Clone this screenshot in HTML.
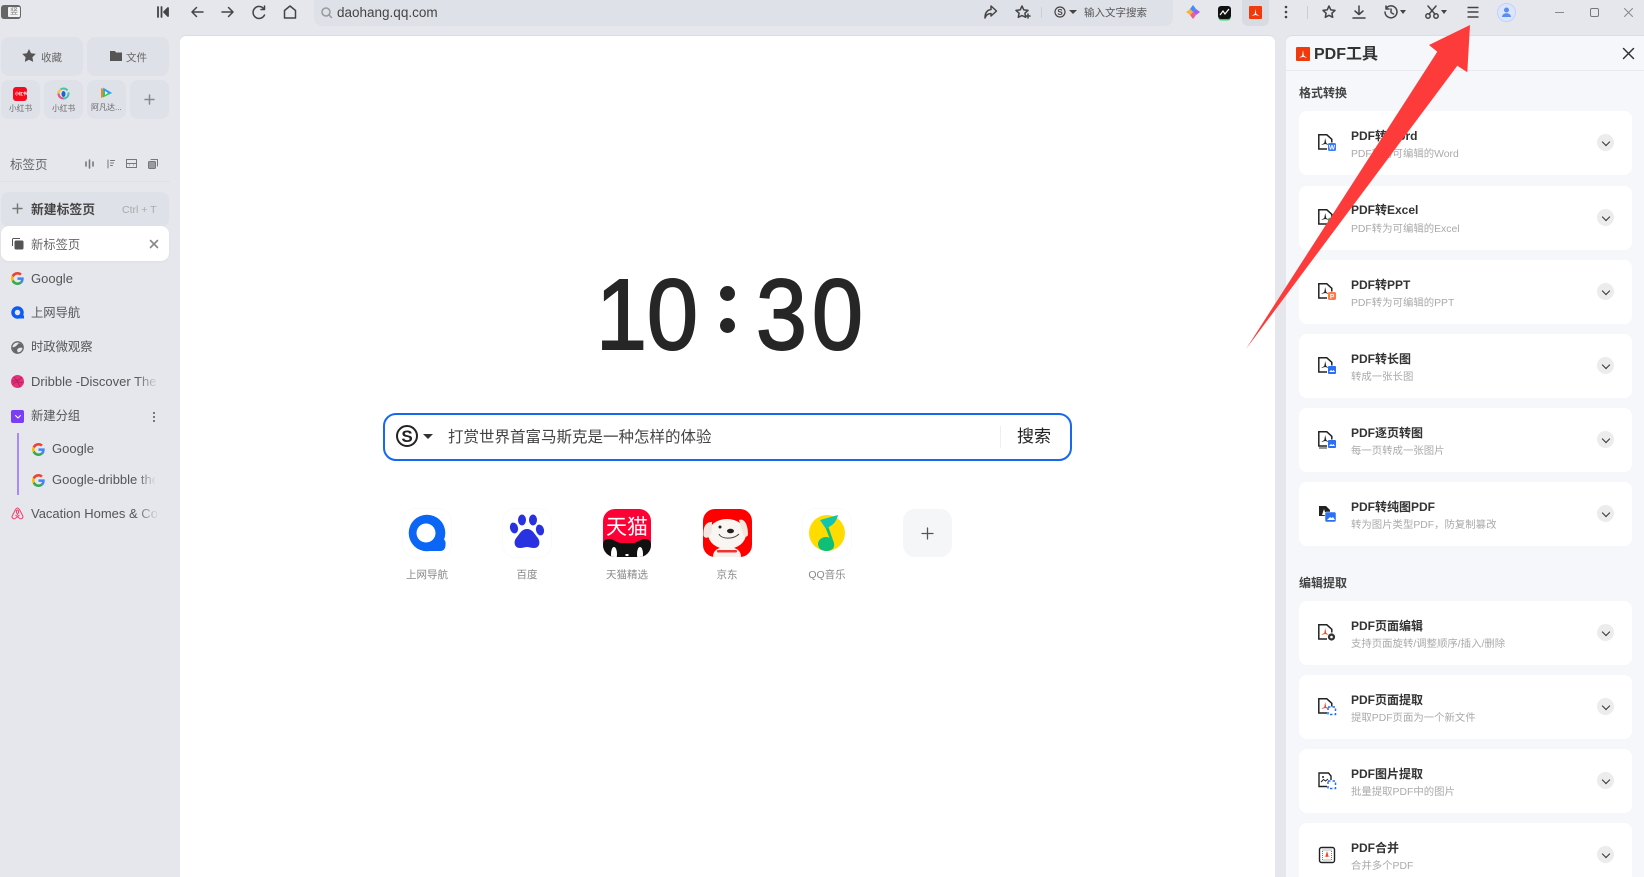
<!DOCTYPE html>
<html lang="zh"><head><meta charset="utf-8"><title>PDF工具</title>
<style>
*{box-sizing:border-box}
html,body{margin:0;padding:0;width:1644px;height:877px;overflow:hidden;background:#e6e7ed;font-family:"Liberation Sans","Noto Sans CJK SC",sans-serif;color:#555}
#root{position:relative;width:1644px;height:877px;overflow:hidden;background:#e6e7ed}
.a,.t{position:absolute}
.t{white-space:nowrap;line-height:20px}
svg{position:absolute;overflow:visible}
.btn{position:absolute;background:#dfe1e8;border-radius:8px}
.i{fill:none;stroke:#444;stroke-width:1.5;stroke-linecap:round;stroke-linejoin:round}
.item{font-size:13px;color:#555;overflow:hidden;-webkit-mask-image:linear-gradient(90deg,#000 82%,transparent);mask-image:linear-gradient(90deg,#000 82%,transparent)}
.cj{font-size:12.3px}
.card{position:absolute;left:1299px;width:333px;height:64px;background:#fff;border-radius:8px}
.card b{position:absolute;left:52px;top:15px;font-size:12px;line-height:20px;color:#333;white-space:nowrap}
.card span{position:absolute;left:52px;top:34px;font-size:10.4px;line-height:20px;color:#aaa;white-space:nowrap}
.card i{position:absolute;left:298px;top:23px;width:17px;height:17px;border-radius:50%;background:#ececec}
.card i:after{content:"";position:absolute;left:6px;top:4.5px;width:5px;height:5px;border-right:1.8px solid #333;border-bottom:1.8px solid #333;transform:rotate(45deg)}
.card svg{left:19px;top:23px}
.tile{position:absolute;top:509px;width:48px;height:48px}
.lab{position:absolute;top:565px;width:80px;text-align:center;font-size:10.5px;line-height:20px;color:#888}
.d{position:absolute;top:255px;font-size:100px;line-height:120px;color:#262626;transform-origin:0 0;transform:scaleX(.915);-webkit-text-stroke:2px #262626}
</style></head><body><div id="root">
<svg width="0" height="0" style="position:absolute"><defs>
<symbol id="g" viewBox="0 0 48 48"><path fill="#EA4335" d="M24 9.5c3.54 0 6.71 1.22 9.21 3.6l6.85-6.85C35.9 2.38 30.47 0 24 0 14.62 0 6.51 5.38 2.56 13.22l7.98 6.19C12.43 13.72 17.74 9.5 24 9.5z"/><path fill="#4285F4" d="M46.98 24.55c0-1.57-.15-3.09-.38-4.55H24v9.02h12.94c-.58 2.96-2.26 5.48-4.78 7.18l7.73 6c4.51-4.18 7.09-10.36 7.09-17.65z"/><path fill="#FBBC05" d="M10.53 28.59c-.48-1.45-.76-2.99-.76-4.59s.27-3.14.76-4.59l-7.98-6.19C.92 16.46 0 20.12 0 24c0 3.88.92 7.54 2.56 10.78l7.97-6.19z"/><path fill="#34A853" d="M24 48c6.48 0 11.93-2.13 15.89-5.81l-7.73-6c-2.15 1.45-4.92 2.3-8.16 2.3-6.26 0-11.57-4.22-13.47-9.91l-7.98 6.19C6.51 42.62 14.62 48 24 48z"/></symbol>
<symbol id="doc" viewBox="0 0 18 18"><path d="M9 15H.8V.8h8l5 4.500V8.500" fill="none" stroke="#222" stroke-width="1.500"/><path d="M7.200 4L6.300 9 3 11l4.200-1L11 11 8.200 9z" fill="#222"/></symbol>
<symbol id="docr" viewBox="0 0 18 18"><path d="M9 15H.8V.8h8l5 4.500V8.500" fill="none" stroke="#222" stroke-width="1.500"/><path d="M7.200 4L6.300 9 3 11l4.200-1L11 11 8.200 9z" fill="#f04a22"/></symbol>
</defs></svg>

<!-- toolbar left -->
<div class="a" style="left:1px;top:5px;width:20px;height:14px;border-radius:3px;background:#666"></div>
<div class="a" style="left:8px;top:7px;width:12px;height:10px;background:#f3f3f3;border-radius:1px"></div>
<div class="t" style="left:10px;top:2px;font-size:8px;color:#777">竖</div>
<svg class="i" style="left:156px;top:5px" width="14" height="14"><path d="M2 2v10M5.500 2v10M12 3L8 7l4 4z" stroke-width="1.800" fill="#444"/></svg>
<svg class="i" style="left:190px;top:5px" width="14" height="14"><path d="M13 7H2M6.500 2.500L2 7l4.500 4.500"/></svg>
<svg class="i" style="left:221px;top:5px" width="14" height="14"><path d="M1 7h11M7.500 2.500L12 7l-4.500 4.500"/></svg>
<svg class="i" style="left:252px;top:5px" width="14" height="14"><path d="M12 4A6 6 0 1 0 12.500 10M12.500 1v3.500H9"/></svg>
<svg class="i" style="left:283px;top:5px" width="14" height="14"><path d="M1.500 5.500L7 1l5.500 4.500V13h-11z"/></svg>
<div class="a" style="left:314px;top:0;width:859px;height:26px;background:#dfe1e8;border-radius:0 0 8px 8px"></div>
<svg class="i" style="left:321px;top:7px;stroke:#999" width="12" height="12"><circle cx="5" cy="5" r="4"/><path d="M8 8l2.500 2.500"/></svg>
<div class="t" style="left:337px;top:3px;font-size:13.5px;color:#444">daohang.qq.com</div>
<svg class="i" style="left:983px;top:5px" width="14" height="14"><path d="M8 1l5.500 5L8 11V8.500C5 8.500 3 10 2 13c0-5 2-8 6-8.500z"/></svg>
<svg class="i" style="left:1015px;top:5px" width="15" height="14"><path d="M7 1l1.800 3.900 4.200.5-3.100 2.800.8 4.100L7 10.500l-3.700 1.800.8-4.100L1 5.400l4.200-.5zM11 11h4M13 9v4"/></svg>
<div class="a" style="left:1041px;top:7px;width:1px;height:11px;background:#ccced6"></div>
<svg style="left:1054px;top:6px" width="12" height="12"><circle cx="6" cy="6" r="5" fill="none" stroke="#444" stroke-width="1.200"/><text x="6" y="9" font-size="8" font-weight="700" text-anchor="middle" fill="#444" font-family="Liberation Sans">S</text></svg>
<div class="a" style="left:1069px;top:10px;border:4px solid transparent;border-top:4px solid #444"></div>
<div class="t" style="left:1084px;top:3px;font-size:10.500px;color:#555">输入文字搜索</div>
<svg style="left:1186px;top:5px" width="14" height="14"><path d="M7 0l3 4-3 3-3-3z" fill="#3f8ef5"/><path d="M14 7l-4 3-3-3 3-3z" fill="#a55cf0"/><path d="M7 14l-3-4 3-3 3 3z" fill="#f05c8c"/><path d="M0 7l4-3 3 3-3 3z" fill="#f5b53a"/></svg>
<div class="a" style="left:1218px;top:6px;width:13px;height:13px;background:#111;border-radius:3px;box-shadow:0 2px 0 -0.500px #2dd36f"></div>
<svg style="left:1218px;top:6px" width="13" height="13"><path d="M2 9l3-4 2 3 4-5" fill="none" stroke="#fff" stroke-width="1.200"/></svg>
<div class="a" style="left:1242px;top:0;width:27px;height:26px;background:#d9dbe3;border-radius:0 0 6px 6px"></div>
<div class="a" style="left:1249px;top:6px;width:13px;height:13px;background:#f03a0e;border-radius:1px"></div>
<svg style="left:1249px;top:6px" width="13" height="13"><path d="M6.500 3L5.700 8 2.500 10l4-1 4 1-3.200-2z" fill="#fff"/></svg>
<svg style="left:1283px;top:5px" width="6" height="14"><circle cx="3" cy="2" r="1.300" fill="#444"/><circle cx="3" cy="7" r="1.300" fill="#444"/><circle cx="3" cy="12" r="1.300" fill="#444"/></svg>
<div class="a" style="left:1307px;top:6px;width:1px;height:13px;background:#ccced6"></div>
<svg class="i" style="left:1322px;top:5px" width="14" height="14"><path d="M7 1l1.800 3.900 4.200.5-3.100 2.800.8 4.100L7 10.300l-3.700 2 .8-4.100L1 5.400l4.200-.5z"/></svg>
<svg class="i" style="left:1352px;top:5px" width="14" height="14"><path d="M7 1v8.500M3 6l4 3.500L11 6M1 13h12"/></svg>
<svg class="i" style="left:1384px;top:5px" width="14" height="14"><path d="M2 3.500A6 6 0 1 1 1 7M2 1v3h3M7 4v3.500l2.500 1.500"/></svg>
<div class="a" style="left:1400px;top:10px;border:3.500px solid transparent;border-top:4px solid #444"></div>
<svg class="i" style="left:1425px;top:5px" width="14" height="14"><circle cx="3" cy="11" r="2.200"/><circle cx="11" cy="11" r="2.200"/><path d="M4 9.200L11 1M10 9.200L3 1"/></svg>
<div class="a" style="left:1441px;top:10px;border:3.500px solid transparent;border-top:4px solid #444"></div>
<svg class="i" style="left:1467px;top:6px" width="12" height="12"><path d="M.5 1.500h11M.5 6h11M.5 11h11" stroke-width="1.600" stroke-linecap="butt"/></svg>
<div class="a" style="left:1497px;top:3px;width:19px;height:19px;border-radius:50%;background:#dbe5fb;border:1px solid #bfd2fa"></div>
<svg style="left:1497px;top:3px" width="19" height="19"><circle cx="9.500" cy="7" r="2.500" fill="#5b8def"/><path d="M5 14c0-5 9-5 9 0z" fill="#5b8def"/></svg>
<div class="a" style="left:1555px;top:12px;width:9px;height:1px;background:#888"></div>
<div class="a" style="left:1590px;top:8px;width:9px;height:9px;border:1px solid #777;border-radius:2px"></div>
<svg class="i" style="left:1624px;top:8px;stroke:#888;stroke-width:1" width="9" height="9"><path d="M.5.500l8 8M8.500.500l-8 8"/></svg>

<!-- sidebar -->
<div class="btn" style="left:1px;top:37px;width:82px;height:39px"></div>
<div class="btn" style="left:87px;top:37px;width:82px;height:39px"></div>
<svg style="left:22px;top:49px" width="14" height="13"><path d="M7 0l2.100 4.300 4.700.6-3.400 3.300.8 4.700L7 10.700l-4.200 2.200.8-4.700L.2 4.900l4.700-.6z" fill="#555"/></svg>
<div class="t" style="left:41px;top:47.500px;font-size:10.500px;color:#666">收藏</div>
<svg style="left:110px;top:50px" width="12" height="11"><path d="M0 1h5l1 1.500h6V11H0z" fill="#555"/></svg>
<div class="t" style="left:126px;top:47.500px;font-size:10.500px;color:#666">文件</div>
<div class="btn" style="left:1px;top:80px;width:39px;height:39px"></div>
<div class="btn" style="left:44px;top:80px;width:39px;height:39px"></div>
<div class="btn" style="left:87px;top:80px;width:39px;height:39px"></div>
<div class="btn" style="left:130px;top:80px;width:39px;height:39px"></div>
<div class="a" style="left:13px;top:87px;width:14px;height:14px;background:#f40b1e;border-radius:3px"></div>
<div class="t" style="left:15px;top:84px;font-size:4px;color:#fff;font-weight:700">小红书</div>
<div class="t" style="left:9px;top:99px;font-size:7.700px;color:#666">小红书</div>
<svg style="left:57px;top:87px" width="13" height="13"><circle cx="6.500" cy="6.500" r="5" fill="none" stroke="#3ec6a8" stroke-width="2" stroke-dasharray="8 2"/><path d="M1.500 6.500a5 5 0 0 0 5 5" fill="none" stroke="#ef4f7e" stroke-width="2"/><path d="M4 2.500a5 5 0 0 0-2.500 4" fill="none" stroke="#f8c43a" stroke-width="2"/><ellipse cx="6.500" cy="7" rx="2" ry="3" fill="#1f5fd6"/></svg>
<div class="t" style="left:52px;top:99px;font-size:7.700px;color:#666">小红书</div>
<svg style="left:100px;top:87px" width="13" height="12"><path d="M1 1l11 5-11 5z" fill="#ff7e29"/><path d="M3 1.500l9 4.500-9 4.500z" fill="#2bcc5f"/><path d="M3 0.500l9 5.500H5z" fill="#23a0f5"/><path d="M5 4l3 2-3 2z" fill="#fff"/></svg>
<div class="t" style="left:91px;top:98px;font-size:8px;color:#666">阿凡达...</div>
<svg class="i" style="left:144px;top:94px;stroke:#888" width="11" height="11"><path d="M5.500 1v9M1 5.500h9"/></svg>

<div class="t" style="left:10px;top:155px;font-size:12.500px;color:#666">标签页</div>
<svg class="i" style="left:85px;top:159px;stroke:#777;stroke-width:1" width="9" height="10"><path d="M1 3v4M4.500 1v8M8 3v4" stroke-width="1.600"/></svg>
<svg class="i" style="left:106px;top:159px;stroke:#777;stroke-width:1" width="9" height="10"><path d="M2 1v8M4.500 1.500h4M4.500 4h3M4.500 6.500h2"/></svg>
<svg class="i" style="left:126px;top:159px;stroke:#777;stroke-width:1" width="11" height="9"><rect x=".5" y=".5" width="10" height="8"/><path d="M.5 4.500h10M3.500 6h0M7.500 6h0"/></svg>
<svg class="i" style="left:148px;top:159px;stroke:#777;stroke-width:1" width="10" height="10"><rect x=".5" y="2.500" width="7" height="7" rx="1" fill="#9a9ba0"/><path d="M3 .5h6.500V7"/></svg>
<div class="a" style="left:0;top:181px;width:170px;height:1px;background:#dfe0e6"></div>

<div class="btn" style="left:1px;top:192px;width:168px;height:35px;background:#dfe1e8"></div>
<svg class="i" style="left:12px;top:203px;stroke:#777" width="11" height="11"><path d="M5.500 1v9M1 5.500h9"/></svg>
<div class="t" style="left:31px;top:200px;font-size:12.800px;font-weight:700;color:#444">新建标签页</div>
<div class="t" style="left:122px;top:200px;font-size:10.500px;color:#aaa">Ctrl + T</div>
<div class="a" style="left:1px;top:226px;width:168px;height:35px;background:#fff;border-radius:8px;box-shadow:0 1px 3px rgba(0,0,0,.04)"></div>
<svg style="left:12px;top:238px" width="12" height="12"><path d="M.5 8V1.500a1 1 0 0 1 1-1H8" fill="none" stroke="#555"/><rect x="2.500" y="2.500" width="9" height="9" rx="1.500" fill="#555"/></svg>
<div class="t" style="left:31px;top:235px;font-size:12.300px;color:#666">新标签页</div>
<svg class="i" style="left:150px;top:240px;stroke:#888;stroke-width:1.600" width="8" height="8"><path d="M.5.500l7 7M7.500.500l-7 7"/></svg>

<svg style="left:11px;top:272px" width="13" height="13"><use href="#g"/></svg>
<div class="t item" style="left:31px;top:269px;width:128px">Google</div>
<svg style="left:11px;top:306px" width="13" height="13"><circle cx="6.500" cy="6.500" r="4.500" fill="none" stroke="#0b5bf5" stroke-width="3.500"/><path d="M8 12.500h5V9z" fill="#0b5bf5"/></svg>
<div class="t item cj" style="left:31px;top:303px;width:128px">上网导航</div>
<svg style="left:11px;top:341px" width="13" height="13"><circle cx="6.500" cy="6.500" r="5.700" fill="none" stroke="#666" stroke-width="1.300"/><path d="M1 6c3 1 5-2 7-4 3 1 4 3 4 5-3-1-5 0-6 2l1 3c-3 0-5-2-6-6z" fill="#666"/></svg>
<div class="t item cj" style="left:31px;top:337px;width:128px">时政微观察</div>
<svg style="left:11px;top:375px" width="13" height="13"><circle cx="6.500" cy="6.500" r="6.500" fill="#e5307a"/><path d="M3 2c3 3 5 6 6 10.500M1 6c4 0 8-1 10-4M1.500 9.500c3-3 7-3 11-1.500" fill="none" stroke="#b31a58" stroke-width=".8"/></svg>
<div class="t item" style="left:31px;top:372px;width:128px">Dribble -Discover The World</div>
<div class="a" style="left:11px;top:410px;width:13px;height:13px;background:#7a3ff2;border-radius:2px"></div>
<svg class="i" style="left:15px;top:415px;stroke:#fff;stroke-width:1" width="6" height="4"><path d="M.5.500L3 3 5.500.500"/></svg>
<div class="t" style="left:31px;top:406px;font-size:12.300px;color:#555">新建分组</div>
<svg style="left:151px;top:411px" width="6" height="12"><circle cx="3" cy="2" r="1" fill="#555"/><circle cx="3" cy="6" r="1" fill="#555"/><circle cx="3" cy="10" r="1" fill="#555"/></svg>
<div class="a" style="left:17px;top:433px;width:1.500px;height:62px;background:#a98bf3"></div>
<svg style="left:32px;top:443px" width="13" height="13"><use href="#g"/></svg>
<div class="t item" style="left:52px;top:439px;width:104px">Google</div>
<svg style="left:32px;top:474px" width="13" height="13"><use href="#g"/></svg>
<div class="t item" style="left:52px;top:470px;width:104px">Google-dribble the world</div>
<svg style="left:11px;top:507px" width="13" height="13"><path d="M6.500 7.500C5 5.500 5 3 6.500 3S8 5.500 6.500 7.500zM6.500 1C5 1 4.500 2.500 3.500 4.500L1.200 9c-.7 2 1.500 3.500 3 2.500L8.500 8M6.500 1C8 1 8.500 2.500 9.500 4.500L11.800 9c.7 2-1.500 3.500-3 2.500L4.500 8" fill="none" stroke="#f0406a" stroke-width="1"/></svg>
<div class="t item" style="left:31px;top:504px;width:128px">Vacation Homes &amp; Condos</div>

<!-- main -->
<div class="a" style="left:180px;top:36px;width:1095px;height:841px;background:#fff;border-radius:6px 6px 0 0;box-shadow:0 -1px 0 #dcdde3"></div>
<div class="d" style="left:596px">1</div>
<div class="d" style="left:647px">0</div>
<div class="a" style="left:720px;top:286px;width:15px;height:15px;border-radius:50%;background:#262626"></div>
<div class="a" style="left:720px;top:318px;width:15px;height:15px;border-radius:50%;background:#262626"></div>
<div class="d" style="left:756px">3</div>
<div class="d" style="left:812px">0</div>

<div class="a" style="left:383px;top:413px;width:689px;height:48px;border:2px solid #1668f0;border-radius:13px;background:#fff"></div>
<svg style="left:395px;top:424px" width="24" height="24"><circle cx="12" cy="12" r="10" fill="none" stroke="#222" stroke-width="2"/><text x="12" y="18" font-size="17" font-weight="700" text-anchor="middle" fill="#222" font-family="Liberation Sans">S</text></svg>
<div class="a" style="left:423px;top:434px;border:5px solid transparent;border-top:5px solid #333"></div>
<div class="t" style="left:448px;top:428px;font-size:15.500px;color:#444">打赏世界首富马斯克是一种怎样的体验</div>
<div class="a" style="left:1000px;top:426px;width:1px;height:22px;background:#eee"></div>
<div class="t" style="left:1017px;top:427px;font-size:17px;color:#222">搜索</div>

<div class="tile" style="left:403px;border-radius:12px;box-shadow:0 0 0 .5px #f5f5f5"></div>
<svg style="left:403px;top:509px" width="48" height="48"><circle cx="24" cy="24" r="18.300" fill="#0b65f5"/><circle cx="23" cy="24" r="9.500" fill="#fff"/><path d="M27 42c-1-5 0-9 5-10 1-3 5-4 7-2 3 0 4 3 3.500 6 0 3-1.500 6-5 6z" fill="#0b65f5"/><path d="M25 32c2-4 5-5 7-5" fill="none" stroke="#fff" stroke-width="1"/></svg>
<div class="lab" style="left:387px">上网导航</div>

<div class="tile" style="left:503px;border-radius:12px;box-shadow:0 0 0 .5px #f5f5f5"></div>
<svg style="left:503px;top:509px" width="48" height="48"><g fill="#2932e1"><ellipse cx="19" cy="11" rx="4" ry="5.500"/><ellipse cx="30" cy="11" rx="4" ry="5.500"/><ellipse cx="11" cy="19" rx="4" ry="5.500" transform="rotate(-15 11 19)"/><ellipse cx="37" cy="21" rx="4" ry="5.500" transform="rotate(-15 37 21)"/><path d="M24 20c5 0 7 4 10 8 4 4 3 11-3 11-3 0-5-1-7-1s-4 1-7 1c-6 0-7-7-3-11 3-4 5-8 10-8z"/></g></svg>
<div class="lab" style="left:487px">百度</div>

<svg style="left:603px;top:509px;overflow:hidden;border-radius:12px;background:#ff0036" width="48" height="48"><text x="24" y="25" font-size="21" fill="#fff" text-anchor="middle" font-family="Noto Sans CJK SC, sans-serif">天猫</text><path d="M0 36c0-4 2-6 6-6 5 0 8 4 12 4h12c4 0 7-4 12-4 4 0 6 2 6 6v12H0z" fill="#111"/><ellipse cx="11" cy="45" rx="3" ry="7" fill="#fff"/><ellipse cx="37" cy="45" rx="3" ry="7" fill="#fff"/><rect x="22.500" y="45" width="3" height="2" fill="#fff"/></svg>
<div class="lab" style="left:587px">天猫精选</div>

<svg style="left:703px;top:509px;overflow:hidden;border-radius:12px;background:#fe0000" width="49" height="48"><path d="M10 48c0-6 4-10 14-10s14 4 14 10z" fill="#f6f1ec"/><ellipse cx="24" cy="25" rx="19" ry="15" fill="#f9f5f1"/><path d="M9 13C3 13 0 17 .5 27c3 4 6 1 8-4zM36 11c5-2 9 4 9 14 0 3-3 4-5 0z" fill="#efe7e0"/><circle cx="17" cy="18" r="1.500" fill="#222"/><ellipse cx="27.500" cy="22" rx="3.500" ry="2.300" fill="#222"/><path d="M16 25c2 5 14 6 20 0" fill="none" stroke="#444" stroke-width="1"/><rect x="14" y="41" width="20" height="2.500" rx="1" fill="#e33"/></svg>
<div class="lab" style="left:687px">京东</div>

<div class="tile" style="left:803px;border-radius:12px;box-shadow:0 0 0 .5px #f5f5f5"></div>
<svg style="left:803px;top:509px" width="48" height="48"><circle cx="24" cy="24" r="18" fill="#ffdc00"/><path d="M25 17l6 17c1 5-2 8-7.500 8-6 0-8.500-3.500-8.500-7 0-4 4-7 8-7 1.500 0 2.500 .3 3.500 1L23 20z" fill="#0fbf78"/><path d="M17 11l18-5c-1 4-3 8-6 10l-6 4z" fill="#10c4b0"/></svg>
<div class="lab" style="left:787px">QQ音乐</div>

<div class="tile" style="left:903px;width:49px;background:#f5f6f8;border-radius:12px"></div>
<svg class="i" style="left:921px;top:527px;stroke:#555;stroke-width:1.300" width="13" height="13"><path d="M6.500 1v11M1 6.500h11"/></svg>

<!-- right panel -->
<div class="a" style="left:1286px;top:36px;width:358px;height:841px;background:#f6f7fb;border-radius:6px 0 0 0;box-shadow:0 -1px 0 #dcdde3"></div>
<div class="a" style="left:1286px;top:70px;width:358px;height:1px;background:#e9eaf0"></div>
<div class="a" style="left:1296px;top:47px;width:14px;height:14px;background:#f03a0e;border-radius:1px"></div>
<svg style="left:1296px;top:47px" width="14" height="14"><path d="M7 3L6.200 8.500 3 11l4-1.200 4 1.200-3.200-2.500z" fill="#fff"/></svg>
<div class="t" style="left:1314px;top:45px;font-size:16px;font-weight:700;color:#333;line-height:20px">PDF工具</div>
<svg class="i" style="left:1623px;top:48px;stroke:#333;stroke-width:1.500" width="11" height="11"><path d="M.5.500l10 10M10.500.500l-10 10"/></svg>

<div class="t" style="left:1299px;top:83px;font-size:12px;font-weight:700;color:#444">格式转换</div>

<div class="card" style="top:111px"><b>PDF转Word</b><span>PDF转为可编辑的Word</span><i></i><svg width="18" height="18"><use href="#doc"/><rect x="10" y="9" width="8" height="8" rx="1.500" fill="#3b7cf5"/><text x="14" y="15.500" font-size="6.500" font-weight="700" fill="#fff" text-anchor="middle" font-family="Liberation Sans">W</text></svg></div>
<div class="card" style="top:186px"><b style="top:14px">PDF转Excel</b><span>PDF转为可编辑的Excel</span><i></i><svg width="18" height="18"><use href="#doc"/><rect x="10" y="9" width="8" height="8" rx="1.500" fill="#19b868"/></svg></div>
<div class="card" style="top:260px"><b>PDF转PPT</b><span>PDF转为可编辑的PPT</span><i></i><svg width="18" height="18"><use href="#doc"/><rect x="10" y="9" width="8" height="8" rx="1.500" fill="#ff7a45"/><text x="14" y="15.500" font-size="6.500" font-weight="700" fill="#fff" text-anchor="middle" font-family="Liberation Sans">P</text></svg></div>
<div class="card" style="top:334px"><b>PDF转长图</b><span>转成一张长图</span><i></i><svg width="18" height="18"><use href="#doc"/><rect x="10" y="9" width="8" height="8" rx="1" fill="#2a6ff5"/><path d="M11 15l2-2 1.500 1 1-1 1.500 2z" fill="#fff"/></svg></div>
<div class="card" style="top:408px"><b>PDF逐页转图</b><span>每一页转成一张图片</span><i></i><svg width="18" height="18"><use href="#doc"/><path d="M1 17h8" stroke="#555" stroke-width="1.200"/><rect x="10" y="9" width="8" height="8" rx="1" fill="#2a6ff5"/><path d="M11 15l2-2 1.500 1 1-1 1.500 2z" fill="#fff"/></svg></div>
<div class="card" style="top:482px"><b>PDF转纯图PDF</b><span>转为图片类型PDF，防复制篡改</span><i></i><svg width="18" height="18"><path d="M1 1h7l4 4v6H1z" fill="#222"/><path d="M6 4l-2 6h4z" fill="#fff"/><rect x="7" y="7" width="11" height="10" rx="1.500" fill="#2a6ff5" stroke="#fff" stroke-width=".5"/><path d="M9 15l3-3 1.500 1 1.500-1 2 3z" fill="#fff"/></svg></div>

<div class="t" style="left:1299px;top:573px;font-size:12px;font-weight:700;color:#444">编辑提取</div>

<div class="card" style="top:601px"><b>PDF页面编辑</b><span>支持页面旋转/调整顺序/插入/删除</span><i></i><svg width="18" height="18"><use href="#docr"/><circle cx="13.500" cy="13" r="3.600" fill="#333"/><circle cx="13.500" cy="13" r="1.300" fill="#fff"/></svg></div>
<div class="card" style="top:675px"><b>PDF页面提取</b><span>提取PDF页面为一个新文件</span><i></i><svg width="18" height="18"><use href="#docr"/><rect x="10" y="9" width="7.500" height="7.500" fill="#fff" stroke="#2a6ff5" stroke-width="1.500" stroke-dasharray="2.500 2"/></svg></div>
<div class="card" style="top:749px"><b>PDF图片提取</b><span>批量提取PDF中的图片</span><i></i><svg width="18" height="18"><path d="M9 14.500H1V1h9.500L13 4v4" fill="none" stroke="#222" stroke-width="1.400"/><circle cx="5" cy="5" r="1" fill="#222"/><path d="M3 10l2.500-2.500L7.500 9 10 7" fill="none" stroke="#222"/><rect x="10" y="9" width="7.500" height="7.500" fill="#fff" stroke="#2a6ff5" stroke-width="1.500" stroke-dasharray="2.500 2"/></svg></div>
<div class="card" style="top:823px"><b>PDF合并</b><span>合并多个PDF</span><i></i><svg width="18" height="18"><rect x="1.500" y="1.500" width="15" height="15" rx="2" fill="none" stroke="#222" stroke-width="1.400"/><rect x="4.500" y="4" width="9" height="10" fill="none" stroke="#777" stroke-dasharray="1 1"/><path d="M9 5L7.500 10H6l3 1 3-1h-1.500z" fill="#f04a22"/></svg></div>

<!-- arrow -->
<svg style="left:0;top:0;z-index:5" width="1644" height="877"><polygon points="1470,25 1429,45 1437.300,51.700 1246,349 1457.300,65.700 1467.300,72.300" fill="#fd3b3b"/></svg>
</div></body></html>
